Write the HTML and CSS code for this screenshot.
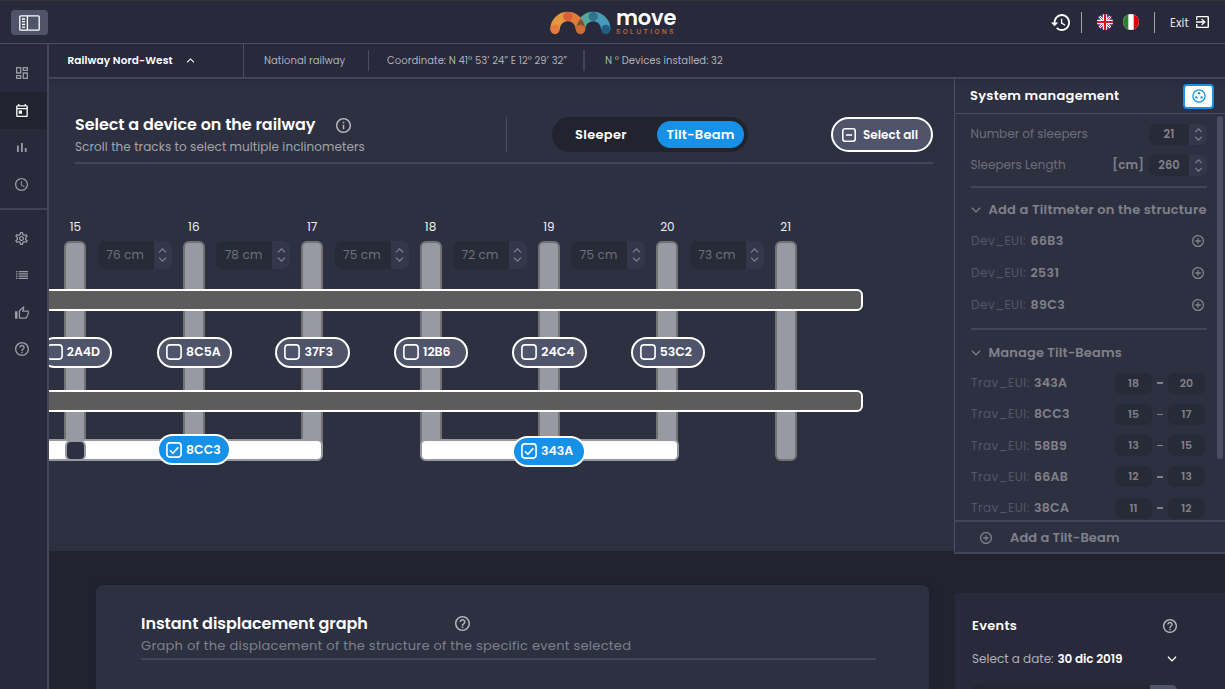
FILE: index.html
```html
<!DOCTYPE html>
<html lang="en">
<head>
<meta charset="utf-8">
<title>Move Solutions</title>
<link rel="stylesheet" href="styles.css">
</head>
<body>
<svg class="defs" aria-hidden="true">
  <symbol id="help" viewBox="2 2 20 20"><path d="M11 18h2v-2h-2v2zm1-16C6.48 2 2 6.48 2 12s4.48 10 10 10 10-4.48 10-10S17.52 2 12 2zm0 18c-4.41 0-8-3.59-8-8s3.59-8 8-8 8 3.59 8 8-3.59 8-8 8zm0-14c-2.21 0-4 1.79-4 4h2c0-1.1.9-2 2-2s2 .9 2 2c0 2-3 1.75-3 5h2c0-2.25 3-2.5 3-5 0-2.21-1.79-4-4-4z"/></symbol>
  <symbol id="plus" viewBox="0 0 12 12"><path class="line" d="M6 .6a5.4 5.4 0 1 0 0 10.8A5.4 5.4 0 1 0 6 .6M6 3.2v5.6M3.2 6h5.6"/></symbol>
  <symbol id="down" viewBox="0 0 10 6"><path class="line" d="M.9.8 5 4.9 9.1.8"/></symbol>
  <symbol id="spin" viewBox="0 0 8 14"><path class="line" d="M.5 4.400 4 .9l3.500 3.500M.5 9.600 4 13.100l3.500-3.500"/></symbol>
  <symbol id="box" viewBox="0 0 16 16"><rect class="line" x=".9" y=".9" width="14.200" height="14.200" rx="3"/></symbol>
  <symbol id="checked" viewBox="0 0 16 16"><rect class="line" x=".9" y=".9" width="14.200" height="14.200" rx="3"/><path class="line" d="m4 8.300 2.900 2.900 5.400-6"/></symbol>
</svg>

<header class="topbar">
  <div class="topbar-left">
    <button class="menu-btn"><svg width="21" height="16" viewBox="0 0 21 16"><rect class="line" x=".8" y=".8" width="19.400" height="14.400" rx="1"/><path class="line" d="M8.400 1v14M3 4h3M3 6.700h3M3 9.400h3M3 12.100h3"/></svg></button>
  </div>
  <div class="logo">
    <svg width="62" height="24" viewBox="0 0 62 24">
      <g fill="none" stroke-width="9.400">
        <path d="M30.500 18.500a12.700 13 0 0 1 12.700-13" stroke="#54a79c"/>
        <path d="M43.200 5.500a12.700 13 0 0 1 12.600 13" stroke="#459bb9"/>
        <path d="M5 18.500A12.700 13 0 0 1 17.700 5.500" stroke="#e5973e"/>
        <path d="M17.700 5.500A12.700 13 0 0 1 30.500 18.500" stroke="#e37b3c"/>
      </g>
      <path d="M30.700 7.700c3.300 3 4.500 7 4.300 10.800h-8.500c-.1-4 1-7.600 4.200-10.800z" fill="#77532f"/>
      <circle cx="5" cy="18.500" r="4.700" fill="#e6793c"/><circle cx="17.700" cy="5.500" r="4.600" fill="#d95d38"/>
      <circle cx="30.500" cy="18.500" r="4.700" fill="#cf6b37"/><circle cx="43.200" cy="5.500" r="4.600" fill="#31738e"/><circle cx="55.800" cy="18.500" r="4.700" fill="#235d86"/>
    </svg>
    <div class="wordmark"><b>move</b><small>SOLUTIONS</small></div>
  </div>
  <div class="topbar-right">
    <svg class="history" width="19" height="17" viewBox="1 3 21 18" preserveAspectRatio="none"><path d="M13 3c-4.970 0-9 4.030-9 9H1l3.890 3.890.07.14L9 12H6c0-3.870 3.130-7 7-7s7 3.130 7 7-3.130 7-7 7c-1.930 0-3.680-.79-4.940-2.060l-1.420 1.420C8.270 19.990 10.510 21 13 21c4.970 0 9-4.030 9-9s-4.030-9-9-9zm-1 5v5l4.280 2.540.72-1.210-3.500-2.080V8H12z"/></svg>
    <i class="vbar"></i>
    <svg class="flag-uk" width="16" height="16" viewBox="0 0 16 16"><clipPath id="c"><circle cx="8" cy="8" r="8"/></clipPath><g clip-path="url(#c)"><path fill="#1d3a8f" d="M0 0h16v16H0z"/><path d="m0 0 16 16M16 0 0 16" stroke="#fff" stroke-width="2.600"/><path d="m0 0 16 16M16 0 0 16" stroke="#d8112a" stroke-width=".9"/><path d="M8 0v16M0 8h16" stroke="#fff" stroke-width="4.400"/><path d="M8 0v16M0 8h16" stroke="#d8112a" stroke-width="2.200"/></g></svg>
    <svg class="flag-it" width="16" height="16" viewBox="0 0 16 16"><g clip-path="url(#c)"><path fill="#fff" d="M0 0h16v16H0z"/><path fill="#2d7d32" d="M0 0h5.300v16H0z"/><path fill="#d8000f" d="M10.700 0H16v16h-5.300z"/></g></svg>
    <i class="vbar second"></i>
    <span class="exit">Exit</span>
    <svg width="13" height="12" viewBox="3 3 18 18" preserveAspectRatio="none"><path d="M10.090 15.590L11.500 17l5-5-5-5-1.410 1.410L12.670 11H3v2h9.670l-2.580 2.590zM19 3H5c-1.110 0-2 .9-2 2v4h2V5h14v14H5v-4H3v4c0 1.100.89 2 2 2h14c1.100 0 2-.9 2-2V5c0-1.100-.9-2-2-2z"/></svg>
  </div>
</header>

<div class="shell">
  <nav class="sidebar">
    <a class="nav"><svg width="12" height="12" viewBox="3 3 18 18"><path d="M19 5v2h-4V5h4M9 5v6H5V5h4m10 8v6h-4v-6h4M9 17v2H5v-2h4M21 3h-8v6h8V3zM11 3H3v10h8V3zm10 8h-8v10h8V11zm-10 4H3v6h8v-6z"/></svg></a>
    <a class="nav active"><svg width="12" height="13" viewBox="3 2 18 20"><path d="M19 4h-1V2h-2v2H8V2H6v2H5c-1.110 0-1.990.9-1.990 2L3 20c0 1.100.89 2 2 2h14c1.100 0 2-.9 2-2V6c0-1.100-.9-2-2-2zm0 16H5V10h14v10zm0-12H5V6h14v2zM7 12h5v5H7z"/></svg></a>
    <a class="nav"><svg width="10" height="9" viewBox="0 0 10 9"><path d="M0 2.600h1.800V9H0zM4 0h1.800v9H4zM7.800 5h1.800v4H7.800z"/></svg></a>
    <a class="nav"><svg width="13" height="13" viewBox="2 2 20 20"><path d="M11.990 2C6.470 2 2 6.480 2 12s4.470 10 9.990 10C17.520 22 22 17.520 22 12S17.520 2 11.990 2zM12 20c-4.420 0-8-3.580-8-8s3.580-8 8-8 8 3.580 8 8-3.580 8-8 8zm.5-13H11v6l5.250 3.150.75-1.230-4.500-2.670z"/></svg></a>
    <i class="nav-rule"></i>
    <a class="nav"><svg width="13" height="13" viewBox="2 2 20 20"><path d="M19.430 12.980c.04-.32.07-.64.07-.98 0-.34-.03-.66-.07-.98l2.110-1.650c.19-.15.24-.42.12-.64l-2-3.460c-.09-.16-.26-.25-.44-.25-.06 0-.12.01-.17.03l-2.490 1c-.52-.4-1.080-.73-1.690-.98l-.38-2.650C14.460 2.180 14.250 2 14 2h-4c-.25 0-.46.18-.49.42l-.38 2.650c-.61.25-1.170.59-1.690.98l-2.490-1c-.06-.02-.12-.03-.18-.03-.17 0-.34.09-.43.25l-2 3.460c-.13.22-.07.49.12.64l2.110 1.650c-.04.32-.07.65-.07.98 0 .33.03.66.07.98l-2.110 1.650c-.19.15-.24.42-.12.64l2 3.460c.09.16.26.25.44.25.06 0 .12-.01.17-.03l2.490-1c.52.4 1.080.73 1.690.98l.38 2.650c.03.24.24.42.49.42h4c.25 0 .46-.18.49-.42l.38-2.650c.61-.25 1.170-.59 1.690-.98l2.490 1c.06.02.12.03.18.03.17 0 .34-.09.43-.25l2-3.460c.12-.22.07-.49-.12-.64l-2.110-1.650zm-1.980-1.710c.04.31.05.52.05.73 0 .21-.02.43-.05.73l-.14 1.130.89.7 1.080.84-.7 1.210-1.270-.51-1.040-.42-.9.68c-.43.32-.84.56-1.250.73l-1.060.43-.16 1.130-.2 1.350h-1.400l-.19-1.350-.16-1.130-1.060-.43c-.43-.18-.83-.41-1.230-.71l-.91-.7-1.060.43-1.270.51-.7-1.210 1.080-.84.89-.7-.14-1.130c-.03-.31-.05-.54-.05-.74s.02-.43.05-.73l.14-1.130-.89-.7-1.080-.84.7-1.210 1.270.51 1.040.42.9-.68c.43-.32.84-.56 1.250-.73l1.060-.43.16-1.130.2-1.350h1.390l.19 1.350.16 1.130 1.060.43c.43.18.83.41 1.230.71l.91.7 1.060-.43 1.270-.51.7 1.210-1.070.85-.89.7.14 1.130zM12 8c-2.210 0-4 1.790-4 4s1.790 4 4 4 4-1.790 4-4-1.790-4-4-4zm0 6c-1.100 0-2-.9-2-2s.9-2 2-2 2 .9 2 2-.9 2-2 2z"/></svg></a>
    <a class="nav"><svg width="12" height="8" viewBox="0 0 12 8"><path d="M0 0h1.400v1.200H0zM0 2.300h1.400v1.200H0zM0 4.600h1.400v1.200H0zM0 6.800h1.400V8H0zM2.600 0H12v1.200H2.600zM2.600 2.300H12v1.200H2.600zM2.600 4.600H12v1.200H2.600zM2.600 6.800H12V8H2.600z"/></svg></a>
    <a class="nav"><svg width="14" height="13" viewBox="1 1 22 20"><path d="M9 21h9c.83 0 1.540-.5 1.840-1.220l3.020-7.050c.09-.23.14-.47.14-.73v-2c0-1.100-.9-2-2-2h-6.310l.95-4.570.03-.32c0-.41-.17-.79-.44-1.060L14.170 1 7.580 7.590C7.220 7.950 7 8.450 7 9v10c0 1.100.9 2 2 2zM9 9l4.340-4.340L12 10h9v2l-3 7H9V9zM1 9h4v12H1z"/></svg></a>
    <a class="nav"><svg width="14" height="14"><use href="#help"/></svg></a>
  </nav>

  <main class="content">
    <div class="crumbs">
      <div class="crumb-main"><span>Railway Nord-West</span><svg class="flip" width="9" height="5"><use href="#down"/></svg></div>
      <div class="crumb c1">National railway</div>
      <div class="crumb c2">Coordinate: N 41° 53’ 24” E 12° 29’ 32”</div>
      <div class="crumb c3">N ° Devices installed: 32</div>
    </div>

    <div class="workspace">
      <section class="railway">
        <div class="rail-head">
          <div class="titles">
            <h1><span>Select a device on the railway</span><svg width="15" height="15" viewBox="2 2 20 20"><path d="M11 7h2v2h-2zm0 4h2v6h-2zm1-9C6.480 2 2 6.480 2 12s4.480 10 10 10 10-4.480 10-10S17.520 2 12 2zm0 18c-4.410 0-8-3.590-8-8s3.590-8 8-8 8 3.590 8 8-3.590 8-8 8z"/></svg></h1>
            <p>Scroll the tracks to select multiple inclinometers</p>
          </div>
          <div class="switch"><span>Sleeper</span><b>Tilt-Beam</b></div>
          <button class="select-all"><svg width="14" height="14" viewBox="0 0 16 16"><rect class="line" x=".9" y=".9" width="14.200" height="14.200" rx="2.500"/><path class="line" d="M4.500 8h7"/></svg><span>Select all</span></button>
        </div>

        <div class="track">
          <div class="sleepers">
            <div class="bay"><span class="num">15</span><i class="sleeper"></i><div class="gap"><span>76 cm</span><em><svg width="9" height="14"><use href="#spin"/></svg></em></div></div>
            <div class="bay"><span class="num">16</span><i class="sleeper"></i><div class="gap"><span>78 cm</span><em><svg width="9" height="14"><use href="#spin"/></svg></em></div></div>
            <div class="bay"><span class="num">17</span><i class="sleeper"></i><div class="gap"><span>75 cm</span><em><svg width="9" height="14"><use href="#spin"/></svg></em></div></div>
            <div class="bay"><span class="num">18</span><i class="sleeper"></i><div class="gap"><span>72 cm</span><em><svg width="9" height="14"><use href="#spin"/></svg></em></div></div>
            <div class="bay"><span class="num">19</span><i class="sleeper"></i><div class="gap"><span>75 cm</span><em><svg width="9" height="14"><use href="#spin"/></svg></em></div></div>
            <div class="bay"><span class="num">20</span><i class="sleeper"></i><div class="gap"><span>73 cm</span><em><svg width="9" height="14"><use href="#spin"/></svg></em></div></div>
            <div class="bay"><span class="num">21</span><i class="sleeper"></i></div>
          </div>
          <i class="rail upper"></i>
          <i class="rail lower"></i>
          <i class="beam left"></i>
          <i class="joint"></i>
          <i class="beam right"></i>
          <div class="devices">
            <span class="device cut"><svg width="16" height="16"><use href="#box"/></svg>2A4D</span>
            <span class="device"><svg width="16" height="16"><use href="#box"/></svg>8C5A</span>
            <span class="device"><svg width="16" height="16"><use href="#box"/></svg>37F3</span>
            <span class="device"><svg width="16" height="16"><use href="#box"/></svg>12B6</span>
            <span class="device"><svg width="16" height="16"><use href="#box"/></svg>24C4</span>
            <span class="device"><svg width="16" height="16"><use href="#box"/></svg>53C2</span>
          </div>
          <span class="device on first"><svg width="16" height="16"><use href="#checked"/></svg>8CC3</span>
          <span class="device on last"><svg width="16" height="16"><use href="#checked"/></svg>343A</span>
        </div>
      </section>

      <aside class="manage">
        <div class="manage-head"><h2>System management</h2><button><svg width="14" height="14" viewBox="0 0 14 14"><circle class="line" cx="7" cy="7" r="6.100"/><circle cx="7" cy="4.300" r="1.200"/><circle cx="4.400" cy="8.400" r="1.200"/><circle cx="9.600" cy="8.400" r="1.200"/></svg></button></div>
        <div class="manage-body">
          <div class="field"><span>Number of sleepers</span><div class="stepper"><b>21</b><em><svg width="9" height="13"><use href="#spin"/></svg></em></div></div>
          <div class="field"><span>Sleepers Length</span><b class="unit">[cm]</b><div class="stepper"><b>260</b><em><svg width="9" height="13"><use href="#spin"/></svg></em></div></div>
          <hr>
          <h3 class="wide"><svg width="10" height="6"><use href="#down"/></svg><span>Add a Tiltmeter on the structure</span></h3>
          <div class="dev"><span>Dev_EUI:</span><b>66B3</b><svg width="12" height="12"><use href="#plus"/></svg></div>
          <div class="dev"><span>Dev_EUI:</span><b>2531</b><svg width="12" height="12"><use href="#plus"/></svg></div>
          <div class="dev"><span>Dev_EUI:</span><b>89C3</b><svg width="12" height="12"><use href="#plus"/></svg></div>
          <hr class="low">
          <h3><svg width="10" height="6"><use href="#down"/></svg><span>Manage Tilt-Beams</span></h3>
          <div class="trav"><span>Trav_EUI:</span><b>343A</b><i>18</i><u></u><i>20</i></div>
          <div class="trav"><span>Trav_EUI:</span><b>8CC3</b><i>15</i><u></u><i>17</i></div>
          <div class="trav"><span>Trav_EUI:</span><b>58B9</b><i>13</i><u></u><i>15</i></div>
          <div class="trav"><span>Trav_EUI:</span><b>66AB</b><i>12</i><u></u><i>13</i></div>
          <div class="trav"><span>Trav_EUI:</span><b>38CA</b><i>11</i><u></u><i>12</i></div>
          <i class="thumb"></i>
        </div>
        <div class="manage-foot"><svg width="12" height="12"><use href="#plus"/></svg><span>Add a Tilt-Beam</span></div>
      </aside>
    </div>

    <div class="lower-row">
      <section class="graph">
        <h1><span>Instant displacement graph</span><svg width="15" height="15"><use href="#help"/></svg></h1>
        <p>Graph of the displacement of the structure of the specific event selected</p>
      </section>
      <section class="events">
        <div class="events-head"><h2>Events</h2><svg width="14" height="14"><use href="#help"/></svg></div>
        <div class="date"><span>Select a date:</span><b>30 dic 2019</b><svg width="10" height="6"><use href="#down"/></svg></div>
        <div class="search"><i></i></div>
      </section>
    </div>
  </main>
</div>
</body>
</html>
```
FILE: styles.css
```css
* { box-sizing: border-box; }
body {
  margin: 0;
  width: 1225px;
  height: 689px;
  overflow: hidden;
  background: #21232e;
  color: #fff;
  font-family: Poppins, Inter, "Open Sans", sans-serif;
  font-size: 12px;
  line-height: 16px;
  white-space: nowrap;
}
h1, h2, h3, p { margin: 0; font-size: inherit; font-weight: 600; }
p { font-weight: 400; }
button { border: 0; padding: 0; color: inherit; font: inherit; }
i, em { font-style: normal; }
b { font-weight: 600; }
svg { display: block; fill: currentColor; flex: none; }
.line { fill: none; stroke: currentColor; stroke-width: 1.300; }
.defs { position: absolute; width: 0; height: 0; }
.flip { transform: rotate(180deg); }

/* Top bar */
.topbar {
  display: grid;
  grid-template-columns: 1fr auto 1fr;
  height: 44px;
  background: #28293b;
  border-top: 1px solid #33373a;
  border-bottom: 1px solid #4b4e62;
}
.topbar-left { padding: 9px 0 0 11px; }
.menu-btn { display: flex; align-items: center; justify-content: center; width: 37px; height: 25px; border-radius: 4px; background: #50546a; }
.logo { display: flex; gap: 4.500px; padding-top: 10px; width: 126px; }
.wordmark { display: flex; flex-direction: column; }
.wordmark b { font: 600 21px/18px Poppins, Inter, sans-serif; letter-spacing: -.2px; margin-top: -2px; }
.wordmark small { font: 500 6.500px/8px Inter, sans-serif; letter-spacing: 2.450px; color: #c8733f; margin-top: 1px; }
.topbar-right { display: flex; justify-content: flex-end; align-items: center; padding-right: 16px; }
.history { margin-right: 1px; }
.vbar { width: 1px; height: 21px; background: #a2a3ad; margin: 0 15px 0 10px; }
.vbar.second { margin: 0 15.500px 0 15px; }
.flag-it { margin-left: 10px; }
.exit { width: 26px; font-size: 11.500px; letter-spacing: .1px; color: #e2e2e6; padding-top: 1px; }

/* Side navigation */
.shell { display: flex; height: 645px; }
.sidebar { width: 49px; flex: none; padding-top: 11px; border-right: 2px solid #44465a; background: #28293b; }
.nav { display: flex; align-items: center; justify-content: center; height: 37px; padding: 0 4px 1px 0; color: #9a9aa2; }
.nav.active { background: #21232e; color: #fff; }
.nav-rule { display: block; height: 2px; margin: 5px 0 10px; background: #404357; }

.content { flex: 1; min-width: 0; }
.crumbs { display: flex; align-items: center; height: 35px; background: #28293b; border-bottom: 2px solid #42455a; font-size: 10px; letter-spacing: .04px; color: #b0b0b6; }
.crumb-main { display: flex; align-items: center; align-self: stretch; width: 195px; padding-left: 18.500px; border-right: 1px solid #4b4e62; color: #fff; font-size: 10.500px; font-weight: 600; letter-spacing: .1px; }
.crumb-main span { width: 118px; }
.crumb { height: 21px; line-height: 21px; }
.c1 { width: 125px; padding-left: 20px; border-right: 1px solid #4b4e62; }
.c2 { width: 216px; padding-left: 18px; border-right: 2px solid #42455a; }
.c3 { padding-left: 20px; }

/* Railway workspace */
.workspace { display: flex; height: 472px; background: #2d3041; box-shadow: inset 0 6px 6px -5px #25273a; }
.railway { width: 905px; overflow: hidden; }
.rail-head { display: flex; align-items: flex-start; height: 85px; margin: 0 21px 0 26px; padding-top: 38px; border-bottom: 2px solid #42455a; }
.titles { width: 432px; height: 35px; border-right: 1px solid #4b4e62; }
h1 { display: flex; align-items: center; font-size: 16px; letter-spacing: -.04px; }
.titles h1 span { width: 261px; }
.titles svg { color: #b7b7bb; }
.titles p { margin-top: 6px; font-size: 12px; letter-spacing: .08px; color: #a3a4ab; }
.switch { display: flex; align-items: center; width: 196px; height: 35px; margin-left: 45px; padding: 0 4px 0 23px; border-radius: 18px; background: #21232e; font-size: 13px; font-weight: 600; letter-spacing: .3px; }
.switch span { flex: 1; }
.switch b { width: 87px; height: 27px; border-radius: 14px; background: #1791e8; line-height: 27px; text-align: center; letter-spacing: .2px; }
.select-all { display: flex; align-items: center; width: 102px; height: 35px; margin-left: auto; padding-left: 9px; gap: 7px; border: 2px solid #fff; border-radius: 18px; background: #50546a; font-size: 12px; font-weight: 600; }
.select-all .line { stroke-width: 1.800; }

.track { position: relative; height: 387px; padding: 55px 0 0 15.400px; overflow: hidden; }
.sleepers { display: grid; grid-template-columns: repeat(7, 118.400px); }
.bay { display: grid; grid-template-columns: 22px 1fr; grid-template-rows: 16px auto; row-gap: 6px; column-gap: 11.400px; }
.num { grid-column: 1 / 3; width: 22px; display: flex; justify-content: center; font-size: 12px; color: #eee; }
.sleeper { height: 220px; border: 2px solid #727272; border-radius: 6px; background: #9799a3; }
.gap { display: flex; width: 74px; height: 28px; border-radius: 7px; overflow: hidden; background: #272a37; color: #70717b; font-size: 12px; letter-spacing: .15px; line-height: 28px; }
.gap span { width: 56px; padding-left: 8.500px; }
.gap em { display: flex; flex: 1; align-items: center; justify-content: center; background: #34374b; color: #7e7f88; }

.rail { position: absolute; left: -10px; width: 824px; height: 22px; border: 2px solid #fff; border-radius: 6px; background: #5c5c5c; }
.rail.upper { top: 125px; }
.rail.lower { top: 226.400px; }
.beam { position: absolute; top: 275px; height: 22px; border: 2px solid #9799a3; border-radius: 6px; background: #fff; }
.beam.left { left: -10px; width: 284px; }
.beam.right { left: 371px; width: 259px; }
.joint { position: absolute; left: 16px; top: 276px; width: 21px; height: 21px; border: 2px solid #9799a3; border-radius: 6px; background: #2d3041; }
.devices { position: absolute; top: 173px; left: -10.300px; display: grid; grid-template-columns: repeat(6, 118.400px); }
.device { display: flex; align-items: center; gap: 4px; width: 74.500px; height: 30.500px; padding-left: 7px; border: 2px solid #fff; border-radius: 16px; background: #50546a; font-size: 12.500px; font-weight: 600; }
.device.cut { width: 73px; padding-left: 6px; }
.device.on { position: absolute; width: 74px; height: 31px; background: #1791e8; }
.device.on.first { left: 108px; top: 270px; }
.device.on.last { left: 463px; top: 271.500px; }
.device .line, #box .line, #checked .line { stroke-width: 1.600; }

/* System management */
.manage { width: 271px; height: 475px; border-left: 1px solid #4b4e62; border-bottom: 2px solid #42455a; background: #2d3041; display: flex; flex-direction: column; }
.manage-head { display: flex; align-items: center; justify-content: space-between; height: 35px; padding: 0 11px 0 15px; border-bottom: 1px solid #4b4e62; font-size: 13px; letter-spacing: .28px; box-shadow: inset 0 6px 6px -5px #25273a; }
.manage-head button { display: flex; align-items: center; justify-content: center; width: 31px; height: 25px; border: 2px solid #1791e8; border-radius: 4px; background: #fff; color: #1791e8; }
.manage-body { position: relative; height: 406px; overflow: hidden; padding: 5px 18px 0 15.500px; color: #80818a; font-size: 12px; }
.field { display: flex; align-items: center; height: 30.700px; color: #6d6e79; }
.field > span { flex: 1; letter-spacing: .02px; }
.field b { color: #80818a; }
.unit { margin-right: 5px; }
.stepper { display: flex; width: 58px; height: 21px; border-radius: 7px; overflow: hidden; background: #272a37; line-height: 21px; }
.stepper b { width: 40px; text-align: center; font-size: 11.500px; }
.stepper em { display: flex; flex: 1; align-items: center; justify-content: center; background: #34374b; color: #80818a; }
hr { height: 2px; margin: 5.600px 0 8px; border: 0; background: #42455a; }
h3 { display: flex; align-items: center; height: 28px; gap: 7.500px; padding-left: .5px; font-size: 13px; letter-spacing: .14px; }
h3.wide { letter-spacing: .25px; }
.dev { display: flex; align-items: center; height: 32px; padding: 0 3px 0 .5px; }
.dev:nth-of-type(3) { margin-top: 1px; }
.dev span { width: 59.500px; color: #54566a; letter-spacing: .5px; }
.dev b { flex: 1; font-size: 12.500px; letter-spacing: .4px; }
hr.low { margin: 7px 0 9px; }
.trav { display: grid; grid-template-columns: 58.500px 1fr 37px 7px 37px; column-gap: 4.500px; align-items: center; height: 31.300px; padding: 0 2px 0 .5px; }
h3 + .trav { margin-top: .4px; }
.trav span { color: #54566a; letter-spacing: .5px; }
.trav b { font-size: 12.500px; letter-spacing: .25px; }
.trav i { height: 21px; border-radius: 6px; background: #272a37; font-size: 11px; font-weight: 600; line-height: 21px; text-align: center; }
.trav u { height: 1.500px; width: 6px; background: #80818a; }
.thumb { position: absolute; right: 2px; top: 2px; width: 6px; height: 343px; border-radius: 3px; background: #4b4e64; }
.manage-foot { display: flex; align-items: center; gap: 18.500px; height: 32px; padding: 1px 0 0 24.500px; border-top: 2px solid #42455a; color: #80818a; font-size: 13px; font-weight: 600; letter-spacing: .1px; }

/* Lower cards */
.lower-row { display: flex; align-items: flex-start; gap: 25.500px; padding: 33.500px 0 0 47px; }
.graph { width: 833px; height: 120px; padding: 31px 53px 0 45px; border-radius: 7px; background: #2d3041; box-shadow: 0 0 8px #1d1f29; }
.graph h1 span { width: 314px; }
.graph h1 svg { color: #b7b7bb; }
.graph p { padding: 6px 0 4px; border-bottom: 2px solid #42455a; font-size: 13px; letter-spacing: .265px; color: #7f8089; }
.events { flex: 1; height: 110px; margin-top: 8.500px; padding: 24px 48px 0 17.500px; background: #28293b; }
.events-head { display: flex; align-items: center; justify-content: space-between; height: 17px; font-size: 13px; letter-spacing: .3px; }
.events-head svg { color: #b7b7bb; }
.date { display: flex; align-items: center; height: 16px; margin-top: 17px; font-size: 12px; color: #b0b0b6; }
.date span { width: 85.500px; }
.date b { letter-spacing: -.08px; }
.date b, .date svg { color: #fff; }
.date svg { margin-left: auto; }
.search { display: flex; justify-content: flex-end; height: 22px; margin-top: 18px; border-radius: 5px; background: #252634; overflow: hidden; }
.search i { width: 27px; background: #50546a; }
```
